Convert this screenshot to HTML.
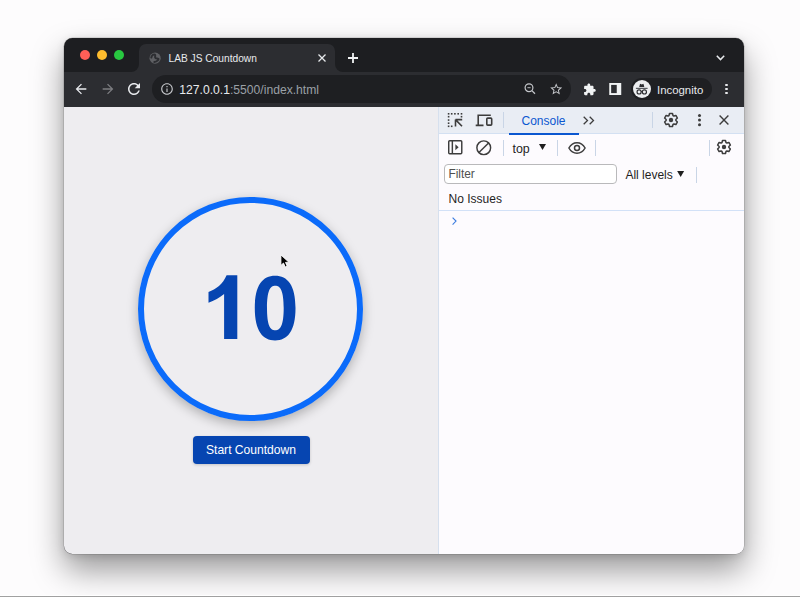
<!DOCTYPE html>
<html><head><meta charset="utf-8">
<style>
*{box-sizing:border-box;margin:0;padding:0}
html,body{width:800px;height:597px;overflow:hidden;background:#fdfcfd;font-family:"Liberation Sans",sans-serif}
.a{position:absolute}
svg{position:absolute;overflow:visible}
#botline{position:absolute;left:0;top:595px;width:800px;height:2px;background:linear-gradient(#fff 0,#fff 25%,#b5b5b5 45%,#8f8f8f 100%)}
#win{position:absolute;left:64px;top:38px;width:680px;height:515.5px;border-radius:8.5px;overflow:hidden;background:#1d1e21;
 box-shadow:0 16px 32px rgba(0,0,0,.40),0 2px 8px rgba(0,0,0,.12),0 0 0 0.5px rgba(0,0,0,.2)}
.dot{position:absolute;top:12px;width:10px;height:10px;border-radius:50%}
.t{position:absolute;white-space:nowrap;line-height:1}
</style></head><body>
<div id="win">
  <!-- tab strip -->
  <div class="dot" style="left:16.4px;top:11.9px;background:#fe5f57"></div>
  <div class="dot" style="left:33px;top:11.9px;background:#febc2e"></div>
  <div class="dot" style="left:50px;top:11.9px;background:#28c840"></div>
  <div class="a" style="left:75px;top:6px;width:196px;height:28px;background:#2c2d31;border-radius:7px 7px 0 0"></div>
  <div class="a" style="left:67px;top:26px;width:8px;height:8px;background:#2c2d31"></div>
  <div class="a" style="left:67px;top:26px;width:8px;height:8px;background:#1d1e21;border-radius:0 0 8px 0"></div>
  <div class="a" style="left:271px;top:26px;width:8px;height:8px;background:#2c2d31"></div>
  <div class="a" style="left:271px;top:26px;width:8px;height:8px;background:#1d1e21;border-radius:0 0 0 8px"></div>
  <svg style="left:0;top:0" width="680" height="515" viewBox="0 0 680 515"><circle cx="91.1" cy="20.15" r="5.6" fill="#5f6064"/><path d="M87.3 19.6C87.6 17.2 89.6 15.9 90.9 16.6C91.8 17.2 90.8 18.6 91.2 19.6C91.6 20.6 93.2 20.4 94.4 20.9C94.9 21.3 93.6 23.4 90.3 24.1" fill="none" stroke="#2c2d31" stroke-width="2" stroke-linecap="round"/></svg>
  <div class="t" style="left:104.5px;top:15.8px;font-size:10.2px;color:#e8eaed">LAB JS Countdown</div>
  <svg style="left:254px;top:16px" width="8" height="8" viewBox="0 0 8 8"><path d="M0.5 0.5L7.5 7.5M7.5 0.5L0.5 7.5" stroke="#e8eaed" stroke-width="1.3"/></svg>
  <svg style="left:284px;top:15px" width="10" height="10" viewBox="0 0 10 10"><path d="M5 0V10M0 5H10" stroke="#f1f3f4" stroke-width="1.8"/></svg>
  <svg style="left:651.6px;top:17px" width="9" height="6" viewBox="0 0 9 6"><path d="M0.8 0.8L4.5 4.6L8.2 0.8" stroke="#e8eaed" stroke-width="1.5" fill="none"/></svg>

  <!-- toolbar -->
  <div class="a" style="left:0;top:34px;width:680px;height:35px;background:#2c2d31"></div>
  <svg style="left:8.8px;top:43px" width="16" height="16" viewBox="0 0 24 24"><path d="M20 11H7.83l5.59-5.59L12 4l-8 8 8 8 1.41-1.41L7.83 13H20v-2z" fill="#e8eaed"/></svg>
  <svg style="left:36px;top:43px" width="16" height="16" viewBox="0 0 24 24"><path d="M4 11h12.17l-5.59-5.59L12 4l8 8-8 8-1.41-1.41L16.17 13H4v-2z" fill="#7c7d80"/></svg>
  <svg style="left:61.1px;top:42px" width="18" height="18" viewBox="0 0 24 24"><path d="M17.65 6.35C16.2 4.9 14.21 4 12 4c-4.42 0-7.99 3.58-7.99 8s3.57 8 7.99 8c3.730 0 6.84-2.55 7.73-6h-2.08c-.82 2.33-3.04 4-5.65 4-3.310 0-6-2.69-6-6s2.69-6 6-6c1.66 0 3.14.69 4.22 1.78L13 11h7V4l-2.35 2.35z" fill="#e8eaed"/></svg>
  <div class="a" style="left:88px;top:37px;width:419px;height:28px;border-radius:14px;background:#1e1f22"></div>
  <svg style="left:95.5px;top:44px" width="14" height="14" viewBox="0 0 24 24"><path d="M11 7h2v2h-2zm0 4h2v6h-2zm1-9C6.48 2 2 6.48 2 12s4.48 10 10 10 10-4.48 10-10S17.52 2 12 2zm0 18c-4.41 0-8-3.59-8-8s3.59-8 8-8 8 3.59 8 8-3.59 8-8 8z" fill="#c4c6ca"/></svg>
  <div class="t" style="left:115.3px;top:45.9px;font-size:12.15px;color:#e8eaed">127.0.0.1<span style="color:#9aa0a6">:5500/index.html</span></div>
  <svg style="left:460px;top:45px" width="12" height="12" viewBox="0 0 12 12"><circle cx="5" cy="4.7" r="3.9" fill="none" stroke="#c4c6ca" stroke-width="1.2"/><path d="M7.9 7.6L11 10.8" stroke="#c4c6ca" stroke-width="1.3"/><path d="M3.4 4.7H6.6" stroke="#c4c6ca" stroke-width="0.9"/></svg>
  <svg style="left:485px;top:43.5px" width="14.4" height="14.4" viewBox="0 0 24 24"><path d="M22 9.24l-7.19-.62L12 2 9.19 8.63 2 9.24l5.46 4.73L5.82 21 12 17.27 18.18 21l-1.63-7.03L22 9.24zM12 15.4l-3.76 2.27 1-4.28-3.32-2.88 4.38-.38L12 6.1l1.71 4.04 4.38.38-3.32 2.88 1 4.28L12 15.4z" fill="#c4c6ca"/></svg>
  <svg style="left:518.5px;top:45.1px" width="13.3" height="13.3" viewBox="0 0 24 24"><path d="M20.5 11H19V7c0-1.1-.9-2-2-2h-4V3.5C13 2.12 11.88 1 10.5 1S8 2.12 8 3.5V5H4c-1.1 0-1.99.9-1.99 2v3.8H3.5c1.49 0 2.7 1.21 2.7 2.7s-1.21 2.7-2.7 2.7H2V20c0 1.1.9 2 2 2h3.8v-1.5c0-1.49 1.21-2.7 2.7-2.7 1.49 0 2.7 1.21 2.7 2.7V22H17c1.1 0 2-.9 2-2v-4h1.5c1.38 0 2.5-1.12 2.5-2.5S21.88 11 20.5 11z" fill="#f1f3f4"/></svg>
  <svg style="left:0;top:0" width="680" height="515" viewBox="0 0 680 515"><rect x="546.2" y="45.95" width="10" height="10.1" fill="none" stroke="#f1f3f4" stroke-width="1.9"/><rect x="552.75" y="45" width="4.35" height="12" fill="#f1f3f4"/></svg>
  <div class="a" style="left:566.5px;top:40px;width:81px;height:22px;border-radius:11px;background:#1e1f22"></div>
  <div class="a" style="left:568.55px;top:41.8px;width:18.4px;height:18.4px;border-radius:50%;background:#eceef0"></div>
  <svg style="left:0;top:0" width="680" height="515" viewBox="0 0 680 515"><path d="M575.2 48.9L575.9 46.2Q576.1 45.6 576.7 45.9L577.75 46.4L578.8 45.9Q579.4 45.6 579.6 46.2L580.3 48.9Z" fill="#2c2d31"/><rect x="571.9" y="49.8" width="11.7" height="1.1" fill="#4a4c52"/><circle cx="575.1" cy="53.9" r="2.05" fill="none" stroke="#2c2d31" stroke-width="1.15"/><circle cx="580.4" cy="53.9" r="2.05" fill="none" stroke="#2c2d31" stroke-width="1.15"/><path d="M577 53.5h1.5" stroke="#2c2d31" stroke-width="0.9"/></svg>
  <div class="t" style="left:593px;top:46.5px;font-size:11.4px;color:#e8eaed">Incognito</div>
  <div class="a" style="left:661.3px;top:45.6px;width:2.6px;height:2.6px;border-radius:50%;background:#e8eaed"></div>
  <div class="a" style="left:661.3px;top:49.7px;width:2.6px;height:2.6px;border-radius:50%;background:#e8eaed"></div>
  <div class="a" style="left:661.3px;top:53.8px;width:2.6px;height:2.6px;border-radius:50%;background:#e8eaed"></div>

  <!-- content -->
  <div class="a" style="left:0;top:69px;width:680px;height:448px;background:#eeedf0"></div>
  <div class="a" style="left:74.4px;top:158.6px;width:224.8px;height:224.8px;border-radius:50%;border:6px solid #0b6bfa;box-shadow:0 4px 12px rgba(0,0,0,.27)"></div>
  <svg style="left:-64px;top:-38px" width="800" height="597" viewBox="0 0 800 597"><path fill="#0645b1" fill-rule="evenodd" d="M226.6 275.3L237.3 275.3L237.3 339.1L224.1 339.1L224.1 294C220 297.5 214 300.8 208.5 302.7L208.5 292C216 289.5 223 284 226.6 275.3Z M275.1 275.7C287.5 275.7 295.5 285 295.5 308C295.5 331 287.5 340.4 275.1 340.4C262.7 340.4 254.8 331 254.8 308C254.8 285 262.7 275.7 275.1 275.7Z M275.3 285.7C280.5 285.7 283.7 291 283.7 308C283.7 325 280.5 330.3 275.3 330.3C270 330.3 267 325 267 308C267 291 270 285.7 275.3 285.7Z"/></svg>
  <div class="a" style="left:128.5px;top:398.3px;width:117px;height:28px;border-radius:4px;background:#0645b1;box-shadow:0 1px 3px rgba(0,0,0,.18)"></div>
  <div class="t" style="left:128.5px;top:406.2px;width:117px;text-align:center;font-size:12.1px;color:#fff">Start Countdown</div>
  <svg style="left:0;top:0" width="680" height="515" viewBox="0 0 680 515"><path d="M216.9 216.9L216.9 227.4L219.5 225.1L221.2 229L223.2 228.2L221.5 224.4L224.9 224.2Z" fill="#000" stroke="#fff" stroke-width="0.9" stroke-linejoin="round"/></svg>

  <!-- devtools -->
  <div class="a" style="left:374px;top:69px;width:306px;height:448px;background:#fdfbfe;border-left:1px solid #d6e0ee"></div>
  <div class="a" style="left:375px;top:69px;width:305px;height:27px;background:#e9edf4;border-bottom:1px solid #d3e0f2"></div>
  <!-- inspect icon -->
  <svg style="left:0;top:0" width="680" height="515" viewBox="0 0 680 515"><rect x="383.80" y="75.00" width="1.6" height="1.6" fill="#3d3d3d"/><rect x="386.90" y="75.00" width="1.6" height="1.6" fill="#3d3d3d"/><rect x="390.10" y="75.00" width="1.6" height="1.6" fill="#3d3d3d"/><rect x="393.40" y="75.00" width="1.6" height="1.6" fill="#3d3d3d"/><rect x="396.70" y="75.00" width="1.6" height="1.6" fill="#3d3d3d"/><rect x="383.80" y="77.90" width="1.6" height="1.6" fill="#3d3d3d"/><rect x="383.80" y="81.25" width="1.6" height="1.6" fill="#3d3d3d"/><rect x="383.80" y="84.40" width="1.6" height="1.6" fill="#3d3d3d"/><rect x="383.80" y="87.50" width="1.6" height="1.6" fill="#3d3d3d"/><rect x="386.90" y="87.50" width="1.6" height="1.6" fill="#3d3d3d"/><rect x="396.70" y="77.90" width="1.6" height="1.6" fill="#3d3d3d"/><path d="M391.5 81.6H398.2M391.5 81.6V88.6M391.5 81.6L398 88.2" stroke="#3d3d3d" stroke-width="1.6" fill="none"/></svg>
  <!-- device icon -->
  <svg style="left:0;top:0" width="680" height="515" viewBox="0 0 680 515"><path d="M414.2 87V77.3H426.8" stroke="#3c3c3c" stroke-width="1.6" fill="none"/><path d="M411.7 87.3H419.5" stroke="#3c3c3c" stroke-width="1.8"/><rect x="422.8" y="80.1" width="4.9" height="7" rx="0.9" fill="none" stroke="#3c3c3c" stroke-width="1.6"/></svg>
  <div class="a" style="left:439px;top:74px;width:1px;height:16px;background:#c9d5e6"></div>
  <div class="t" style="left:457.5px;top:76.8px;font-size:12px;color:#0b57d0">Console</div>
  <div class="a" style="left:445px;top:95px;width:70px;height:2px;background:#0b57d0"></div>
  <svg style="left:519px;top:78px" width="12" height="9" viewBox="0 0 12 9"><path d="M0.7 0.7L4.5 4.5L0.7 8.3M6.7 0.7L10.5 4.5L6.7 8.3" stroke="#3d3d3d" stroke-width="1.3" fill="none"/></svg>
  <div class="a" style="left:588px;top:74px;width:1px;height:16px;background:#c9d5e6"></div>
  <!-- gear -->
  <svg style="left:598.8px;top:74px" width="16" height="16" viewBox="0 0 16 16"><path d="M6.01 3.52L6.49 1.47L9.51 1.47L9.99 3.52L10.88 4.04L12.90 3.43L14.41 6.04L12.87 7.49L12.87 8.51L14.41 9.96L12.90 12.57L10.88 11.96L9.99 12.48L9.51 14.53L6.49 14.53L6.01 12.48L5.12 11.96L3.10 12.57L1.59 9.96L3.13 8.51L3.13 7.49L1.59 6.04L3.10 3.43L5.12 4.04Z" fill="none" stroke="#3d3d3d" stroke-width="1.5" stroke-linejoin="round"/><circle cx="8" cy="8" r="2.2" fill="#3d3d3d"/></svg>
  <svg style="left:633.9px;top:75.9px" width="3" height="13" viewBox="0 0 3 13"><circle cx="1.5" cy="1.5" r="1.5" fill="#3d3d3d"/><circle cx="1.5" cy="6.1" r="1.5" fill="#3d3d3d"/><circle cx="1.5" cy="10.8" r="1.5" fill="#3d3d3d"/></svg>
  <svg style="left:654.75px;top:77.4px" width="10" height="10" viewBox="0 0 10 10"><path d="M0.6 0.6L9.4 9.4M9.4 0.6L0.6 9.4" stroke="#3d3d3d" stroke-width="1.4"/></svg>

  <!-- console toolbar 2 -->
  <svg style="left:384px;top:102.25px" width="14.5" height="14.5" viewBox="0 0 15 15"><rect x="0.75" y="0.75" width="13.5" height="13.5" rx="1" fill="none" stroke="#3d3d3d" stroke-width="1.5"/><path d="M4.5 1v13" stroke="#3d3d3d" stroke-width="1.5"/><path d="M7.6 4.5L11 7.5L7.6 10.5z" fill="#3d3d3d"/></svg>
  <svg style="left:412px;top:102px" width="15.5" height="15.5" viewBox="0 0 16 16"><circle cx="8" cy="8" r="7.1" fill="none" stroke="#3d3d3d" stroke-width="1.5"/><path d="M3 13L13 3" stroke="#3d3d3d" stroke-width="1.5"/></svg>
  <div class="a" style="left:438.6px;top:101.5px;width:1px;height:16px;background:#c9d5e6"></div>
  <div class="t" style="left:448.5px;top:105px;font-size:12.4px;color:#1f1f1f">top</div>
  <svg style="left:475.4px;top:106px" width="7" height="6" viewBox="0 0 7 6"><path d="M0 0H7L3.5 6z" fill="#1f1f1f"/></svg>
  <div class="a" style="left:493px;top:101.5px;width:1px;height:16px;background:#c9d5e6"></div>
  <svg style="left:503.5px;top:104.25px" width="18" height="12" viewBox="0 0 18 12"><path d="M0.9 6C2.8 2.6 5.7 0.8 9 0.8S15.2 2.6 17.1 6C15.2 9.4 12.3 11.2 9 11.2S2.8 9.4 0.9 6z" fill="none" stroke="#3d3d3d" stroke-width="1.5"/><circle cx="9" cy="6" r="2.5" fill="none" stroke="#3d3d3d" stroke-width="1.5"/></svg>
  <div class="a" style="left:531.2px;top:101.5px;width:1px;height:16px;background:#c9d5e6"></div>
  <div class="a" style="left:645.4px;top:101.5px;width:1px;height:16px;background:#c9d5e6"></div>
  <svg style="left:652px;top:101.4px" width="16" height="16" viewBox="0 0 16 16"><path d="M6.01 3.52L6.49 1.47L9.51 1.47L9.99 3.52L10.88 4.04L12.90 3.43L14.41 6.04L12.87 7.49L12.87 8.51L14.41 9.96L12.90 12.57L10.88 11.96L9.99 12.48L9.51 14.53L6.49 14.53L6.01 12.48L5.12 11.96L3.10 12.57L1.59 9.96L3.13 8.51L3.13 7.49L1.59 6.04L3.10 3.43L5.12 4.04Z" fill="none" stroke="#3d3d3d" stroke-width="1.5" stroke-linejoin="round"/><circle cx="8" cy="8" r="2.2" fill="#3d3d3d"/></svg>

  <!-- filter row -->
  <div class="a" style="left:380.25px;top:126.25px;width:172.5px;height:19.5px;border-radius:4px;border:1px solid #b9b9bb;background:#fff"></div>
  <div class="t" style="left:384.4px;top:131.3px;font-size:11.9px;color:#4f4f4f">Filter</div>
  <div class="t" style="left:561.4px;top:130.5px;font-size:12px;color:#1f1f1f">All levels</div>
  <svg style="left:613.2px;top:133px" width="7.3" height="6" viewBox="0 0 7 6"><path d="M0 0H7L3.5 6z" fill="#1f1f1f"/></svg>
  <div class="a" style="left:632px;top:128.5px;width:1px;height:16px;background:#c9d5e6"></div>
  <div class="t" style="left:384.6px;top:155.3px;font-size:12px;color:#1f1f1f">No Issues</div>
  <div class="a" style="left:375px;top:172px;width:305px;height:1px;background:#d2e1f7"></div>
  <svg style="left:387.9px;top:179px" width="5" height="8.2" viewBox="0 0 5 8.2"><path d="M0.6 0.6L4 4.1L0.6 7.6" stroke="#3f7fe0" stroke-width="1.15" fill="none"/></svg>
</div>
<div id="botline"></div>
</body></html>
